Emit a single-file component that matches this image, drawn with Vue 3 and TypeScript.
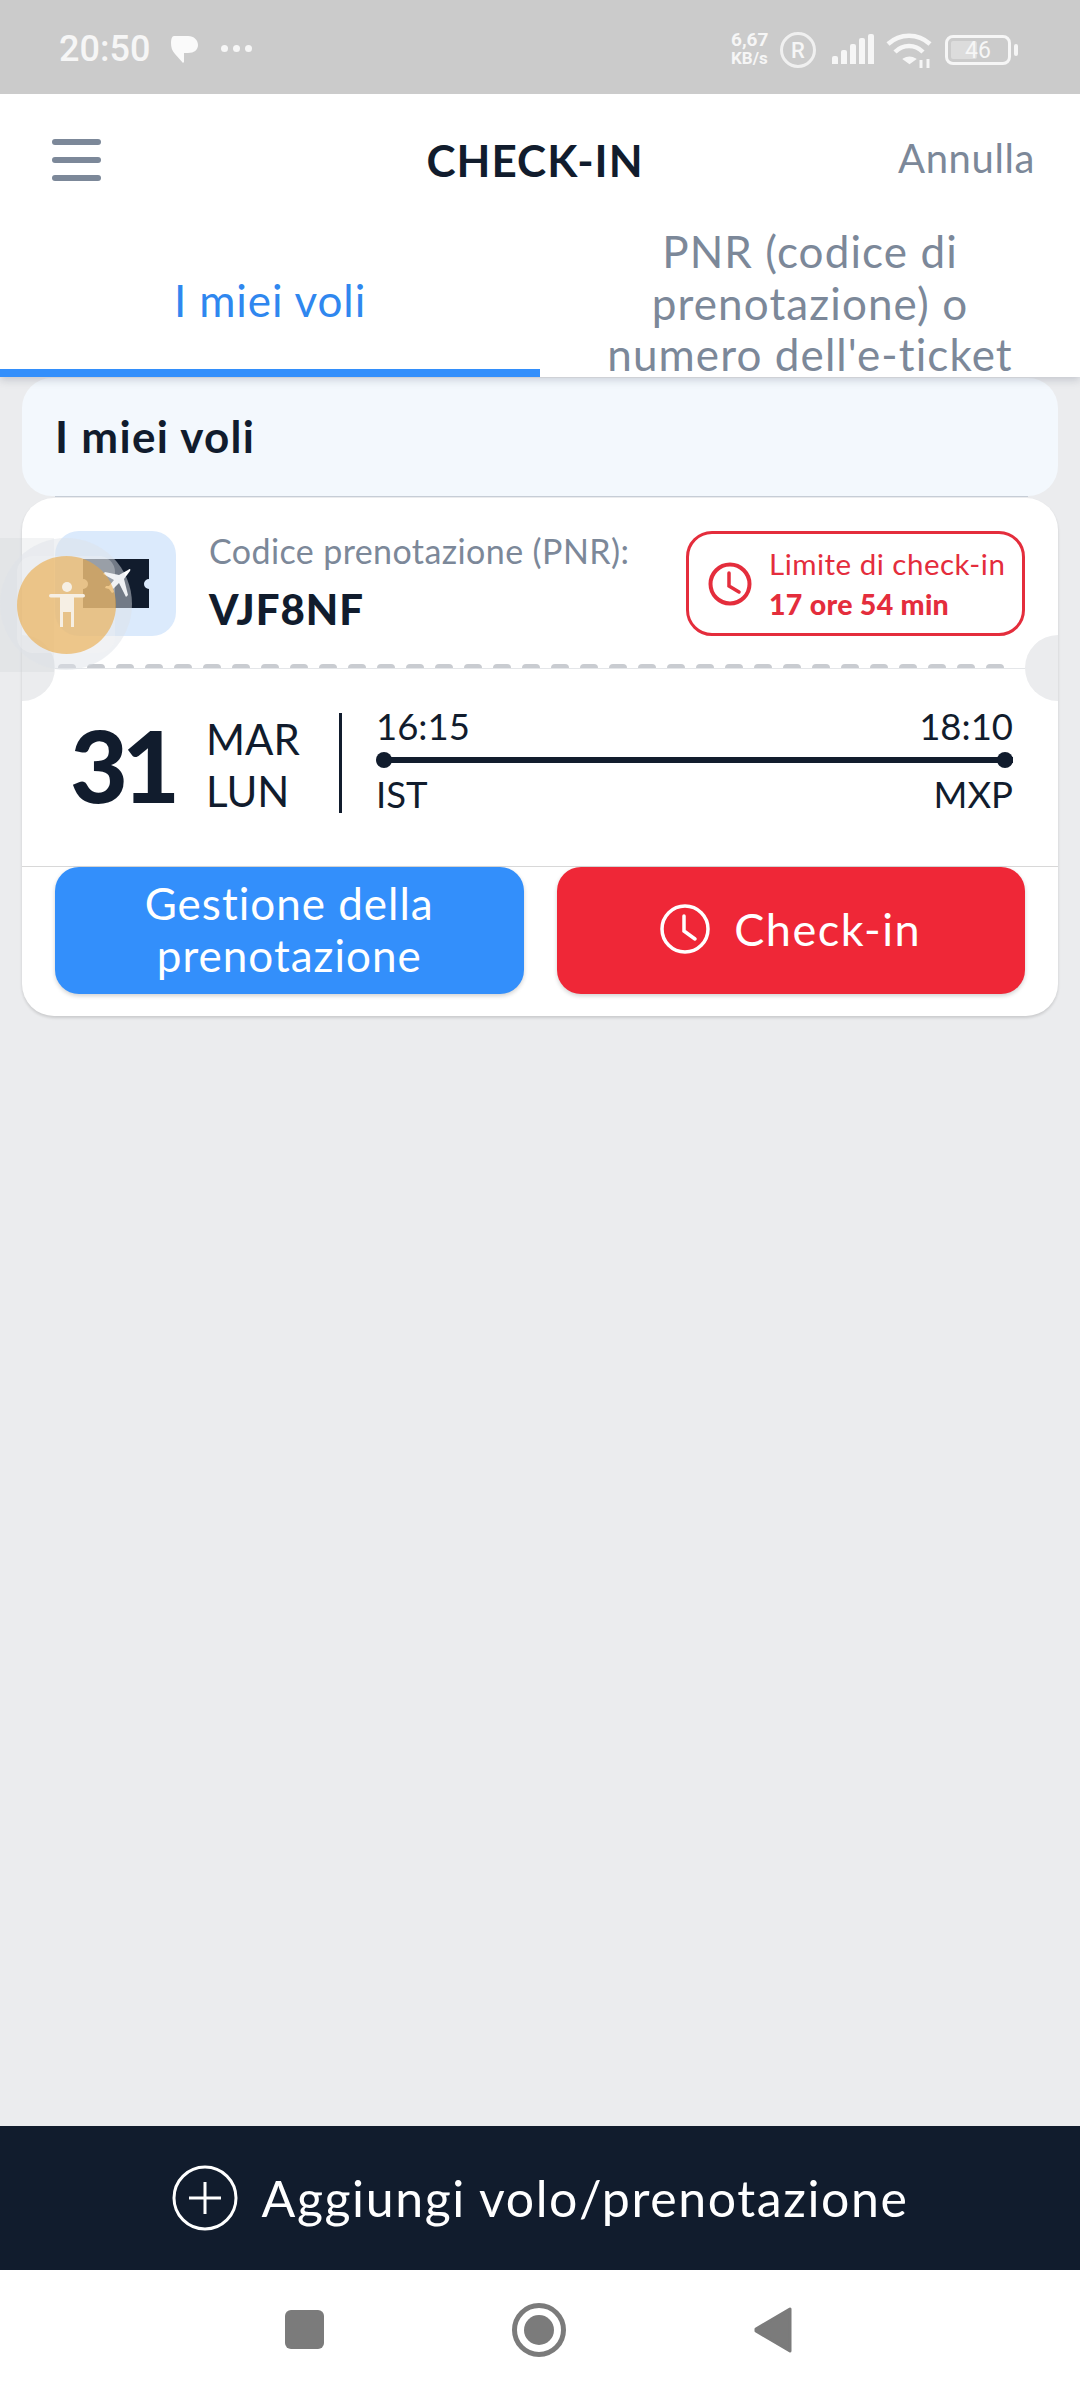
<script setup lang="ts">
const dashes: number[] = Array.from({ length: 33 }, (_, i) => i)
const signal: number[] = [8, 14, 20, 26, 30]
</script>

<template>
  <div class="phone">
    <div class="status">
      <span class="time">20:50</span>
      <svg class="bubble" width="30" height="30" viewBox="0 0 30 30"><path d="M4 2h14c6 0 10 4 10 9s-4 8-10 8h-4v1l0 8-1 1-8-9C2 17 1 13 1 9c0-4 1-7 3-7z" fill="#fafafa"/></svg>
      <span class="dots"><i></i><i></i><i></i></span>
      <span class="grow"></span>
      <span class="speed"><b>6,67</b><b class="kb">KB/s</b></span>
      <span class="reg">R</span>
      <span class="signal"><i v-for="h in signal" :key="h" :style="{ height: h + 'px' }"></i></span>
      <svg class="wifi" width="48" height="36" viewBox="0 0 48 36" fill="none" stroke="#f6f6f6" stroke-width="4.5">
        <path d="M2 11C14 0 32 0 44 11"/><path d="M9 19C17 11 29 11 37 19"/><path d="M18 26c3-2 8-2 11 0l-5.500 4z" fill="#f6f6f6" stroke-width="2"/>
        <path d="M35 27v8M42 26v9" stroke-width="3"/>
      </svg>
      <span class="battery"><span class="level"></span><span class="pct">46</span></span>
      <span class="cap"></span>
    </div>

    <header class="header">
      <span class="burger"><i></i><i></i><i></i></span>
      <h1 class="title">CHECK-IN</h1>
      <span class="cancel">Annulla</span>
    </header>

    <nav class="tabs">
      <div class="tab active"><span>I miei voli</span></div>
      <div class="tab"><span>PNR (codice di prenotazione) o numero dell'e-ticket</span></div>
    </nav>

    <main class="content">
      <div class="section-head">I miei voli</div>
      <section class="ticket">
        <div class="top">
          <div class="thumb">
            <svg width="66" height="49" viewBox="0 0 66 49">
              <path d="M0 0h66v20a5 5 0 0 0 0 10v19H0V30a5 5 0 0 0 0-10z" fill="#111c2d"/>
              <path d="M45 11c2-2 3-1 2 1l-6 8 4 16-2 2-7-14-6 6 1 3-2 1-3-4-4-1 1-2 3 0 5-6-11-6 2-2 14 3z" fill="#fff"/>
            </svg>
          </div>
          <div class="pnr">
            <span class="pnr-label">Codice prenotazione (PNR):</span>
            <strong class="pnr-code">VJF8NF</strong>
          </div>
          <div class="limit">
            <svg width="44" height="44" viewBox="0 0 44 44" fill="none" stroke="#e42d3c" stroke-width="4">
              <circle cx="22" cy="22" r="19.500"/><path d="M21 11v13l10 6" stroke-linecap="round" stroke-width="3.500"/>
            </svg>
            <div class="limit-text">
              <span>Limite di check-in</span>
              <strong>17 ore 54 min</strong>
            </div>
          </div>
        </div>

        <div class="tear">
          <i v-for="d in dashes" :key="d"></i>
          <span class="notch left"></span>
          <span class="notch right"></span>
        </div>

        <div class="flight">
          <span class="day">31</span>
          <div class="month"><span>MAR</span><span>LUN</span></div>
          <span class="vline"></span>
          <div class="route">
            <div class="route-row"><span>16:15</span><span>18:10</span></div>
            <div class="track"></div>
            <div class="route-row"><span>IST</span><span>MXP</span></div>
          </div>
        </div>

        <div class="actions">
          <button class="btn blue">Gestione della prenotazione</button>
          <button class="btn red">
            <svg width="50" height="50" viewBox="0 0 50 50" fill="none" stroke="#fff" stroke-width="3.500">
              <circle cx="25" cy="25" r="23"/><path d="M24 12v15l11 8" stroke-linecap="round"/>
            </svg>
            <span class="checkin">Check-in</span>
          </button>
        </div>
      </section>
    </main>

    <div class="add">
      <svg width="66" height="66" viewBox="0 0 66 66" fill="none" stroke="#fff" stroke-width="3">
        <circle cx="33" cy="33" r="31"/><path d="M17 33h32M33 17v32"/>
      </svg>
      <span>Aggiungi volo/prenotazione</span>
    </div>

    <div class="navbar">
      <span class="nav-square"></span>
      <span class="nav-circle"><i></i></span>
      <svg width="38" height="46" viewBox="0 0 38 46"><path d="M36 2v42L2 24v-2z" fill="#7b7b7b" stroke="#7b7b7b" stroke-width="3" stroke-linejoin="round"/></svg>
    </div>

    <div class="a11y">
      <span class="a11y-panel"></span>
      <span class="a11y-halo"></span>
      <span class="a11y-square"></span>
      <span class="a11y-dot">
        <svg width="36" height="46" viewBox="0 0 36 46" fill="#f6efe4">
          <circle cx="18" cy="5" r="5"/><rect x="0" y="12" width="36" height="3.500" rx="1.700"/><path d="M11 14h14v31h-3V30h-8v15h-3z"/>
        </svg>
      </span>
    </div>
  </div>
</template>

<style>
html, body { margin: 0; padding: 0; }
</style>

<style scoped>
.phone {
  position: relative;
  width: 1080px;
  height: 2400px;
  display: flex;
  flex-direction: column;
  overflow: hidden;
  background: #ebecee;
  font-family: Lato, "Liberation Sans", sans-serif;
  color: #111c2d;
}
.status {
  height: 94px;
  flex: none;
  background: #cbcbcb;
  display: flex;
  align-items: center;
  padding: 6px 0 0 59px;
  box-sizing: border-box;
  color: #f6f6f6;
  font-family: Roboto, sans-serif;
}
.time { font-size: 36px; font-weight: 500; margin-top: -2px; }
.bubble { margin-left: 20px; margin-top: -2px; }
.dots { display: flex; gap: 5px; margin-left: 21px; margin-top: -4px; }
.dots i { width: 7px; height: 7px; border-radius: 50%; background: #f6f6f6; }
.grow { flex: 1; }
.speed { display: flex; flex-direction: column; align-items: flex-start; font-size: 19px; line-height: 18px; width: 42px; margin-top: -2px; }
.speed .kb { font-size: 17px; }
.reg {
  box-sizing: border-box;
  width: 36px; height: 36px;
  margin-left: 7px;
  border: 3.500px solid #f0f0f0;
  border-radius: 50%;
  display: flex; align-items: center; justify-content: center;
  font-size: 22px; font-weight: 500;
}
.signal { display: flex; align-items: flex-end; gap: 3px; height: 30px; margin-left: 16px; margin-top: -2px; }
.signal i { width: 6px; background: #f6f6f6; border-radius: 2px 2px 0 0; }
.wifi { margin-left: 12px; margin-top: 2px; }
.battery {
  position: relative;
  box-sizing: border-box;
  width: 66px; height: 30px;
  margin-left: 11px;
  border: 3.500px solid #f6f6f6;
  border-radius: 8px;
  display: flex; align-items: center; justify-content: center;
  font-size: 23px;
}
.level { position: absolute; left: 3px; top: 3px; bottom: 3px; width: 26px; background: #dcdcdc; border-radius: 2px; }
.pct { position: relative; }
.cap { width: 4px; height: 12px; background: #f6f6f6; border-radius: 2px; margin: 0 62px 0 3px; }

.header {
  height: 132px;
  flex: none;
  background: #fff;
  display: grid;
  grid-template-columns: 1fr auto 1fr;
  align-items: center;
  padding: 0 45px 0 52px;
  box-sizing: border-box;
}
.burger { display: flex; flex-direction: column; gap: 11.500px; width: 49px; }
.burger i { height: 6.500px; border-radius: 3px; background: #7c8899; }
.title { margin: 0 17px 0 0; font-size: 44px; font-weight: 700; letter-spacing: 1px; line-height: 1; }
.cancel { justify-self: end; font-size: 40px; letter-spacing: .6px; color: #7c8899; margin-top: -4px; }

.tabs {
  height: 151px;
  flex: none;
  display: flex;
  background: #fff;
  box-shadow: 0 3px 8px rgba(60, 70, 90, .22);
  clip-path: inset(0 0 -14px 0);
  position: relative;
  z-index: 1;
  font-size: 44px;
  letter-spacing: 1.100px;
  line-height: 51.500px;
  color: #7c8899;
  overflow: hidden;
}
.tab { width: 540px; text-align: center; box-sizing: border-box; padding: 0 55px 0; }
.tab.active {
  color: #2f87ef;
  border-bottom: 8px solid #338ffb;
  display: flex; align-items: center; justify-content: center;
  padding: 6px 0 0;
  letter-spacing: .9px;
}
.content { flex: 1; padding: 1px 22px 0; min-height: 0; }
.section-head {
  position: relative;
  height: 118px;
  box-sizing: border-box;
  background: #f3f8fd;
  border-radius: 30px;
  padding: 34px 33px 0;
  font-size: 44px;
  font-weight: 700;
  letter-spacing: 1.300px;
  line-height: 48px;
}
.section-head::after {
  content: "";
  position: absolute;
  left: 33px; right: 30px; bottom: -1px;
  height: 1.500px;
  background: #c6cdd6;
}
.ticket {
  margin-top: 2px;
  background: #fff;
  border-radius: 32px;
  height: 518px;
  box-shadow: 0 2px 3px rgba(0, 0, 0, .14);
  display: flex;
  flex-direction: column;
}
.top { height: 166px; flex: none; display: flex; padding: 33px 33px 0; box-sizing: border-box; }
.thumb {
  width: 121px; height: 105px;
  border-radius: 24px;
  background: #dbeafc;
  display: flex; align-items: center; justify-content: center;
  flex: none;
}
.pnr { margin-left: 33px; display: flex; flex-direction: column; flex: 1; min-width: 0; white-space: nowrap; }
.pnr-label { font-size: 34px; letter-spacing: .4px; line-height: 40px; color: #7c8899; }
.pnr-code { font-size: 42px; font-weight: 900; line-height: 50px; margin-top: 13px; letter-spacing: 1px; }
.limit {
  width: 339px; height: 105px;
  box-sizing: border-box;
  border: 3px solid #e42d3c;
  border-radius: 26px;
  display: flex; align-items: center;
  padding: 0 0 0 19px;
  gap: 17px;
  color: #e42d3c;
  flex: none;
  font-size: 29.500px;
  letter-spacing: .5px;
}
.limit-text { display: flex; flex-direction: column; line-height: 41px; }
.limit-text strong { font-weight: 900; font-size: 28.500px; letter-spacing: .3px; }
.tear {
  position: relative;
  height: 4px;
  flex: none;
  padding: 0 36px;
  display: flex;
  gap: 11px;
  border-bottom: 1px solid #e4e6e9;
}
.tear i { width: 18px; height: 4px; flex: none; border-radius: 5px 5px 0 0; background: #c9ccd1; }
.notch {
  position: absolute;
  top: -29px;
  width: 66px; height: 66px;
  border-radius: 50%;
  background: #ebecee;
}
.notch.left { left: -33px; clip-path: inset(0 0 0 33px); }
.notch.right { right: -33px; clip-path: inset(0 33px 0 0); }
.flight { height: 198px; flex: none; box-sizing: border-box; display: flex; align-items: center; padding: 0 45px 0 48px; border-bottom: 1px solid #d8d8d8; }
.day { font-size: 100px; font-weight: 900; line-height: 1; letter-spacing: -6px; width: 136px; margin-top: -7px; }
.month { display: flex; flex-direction: column; font-size: 42px; line-height: 52px; margin-top: -5px; width: 133px; }
.vline { width: 3px; height: 100px; background: #111c2d; margin-top: -10px; flex: none; }
.route { flex: 1; margin-left: 34px; margin-top: -5px; font-size: 36.500px; display: flex; flex-direction: column; }
.route-row { display: flex; justify-content: space-between; line-height: 44px; }
.route-row:first-child { margin-top: -11px; }
.track { position: relative; height: 6px; margin: 9px 0 9px 3px; background: #111c2d; }
.track::before, .track::after {
  content: "";
  position: absolute;
  top: -5px;
  width: 16px; height: 16px;
  border-radius: 50%;
  background: #111c2d;
}
.track::before { left: -3px; }
.track::after { right: 0; }
.actions { display: flex; gap: 33px; padding: 0 33px; height: 127px; flex: none; }
.btn {
  flex: 1;
  border: 0;
  border-radius: 24px;
  color: #fff;
  font-family: inherit;
  font-size: 44px;
  letter-spacing: 1px;
  line-height: 52px;
  padding: 0 50px 3px;
  box-shadow: 0 2px 4px rgba(0, 0, 0, .18);
  display: flex; align-items: center; justify-content: center;
  gap: 24px;
}
.checkin { font-size: 45px; letter-spacing: 1.500px; }
.blue { background: #338ffb; }
.red { background: #ef2737; }
.add {
  height: 144px;
  flex: none;
  background: #111c2d;
  color: #fff;
  font-size: 50px;
  letter-spacing: 1.600px;
  display: flex; align-items: center; justify-content: center;
  gap: 24px;
}
.navbar {
  height: 130px;
  flex: none;
  background: #fff;
  display: flex;
  align-items: center;
  padding: 0 0 11px 285px;
  box-sizing: border-box;
}
.nav-square { width: 39px; height: 39px; border-radius: 6px; background: #7b7b7b; }
.nav-circle {
  box-sizing: border-box;
  width: 54px; height: 54px;
  margin-left: 188px;
  border: 5px solid #7b7b7b;
  border-radius: 50%;
  display: flex; align-items: center; justify-content: center;
}
.nav-circle i { width: 30px; height: 30px; border-radius: 50%; background: #7b7b7b; }
.navbar svg { margin-left: 188px; }

.a11y { position: absolute; left: 0; top: 538px; width: 132px; height: 134px; z-index: 3; }
.a11y-panel { position: absolute; left: 0; top: 0; width: 54px; height: 134px; background: rgba(200, 205, 210, .22); }
.a11y-halo { position: absolute; left: 0; top: 0; width: 132px; height: 132px; border-radius: 50%; background: rgba(222, 226, 232, .48); }
.a11y-square { position: absolute; left: 17px; top: 18px; width: 98px; height: 97px; border-radius: 16px; background: rgba(245, 245, 245, .3); }
.a11y-dot {
  position: absolute; left: 17px; top: 18px;
  width: 99px; height: 98px;
  border-radius: 50%;
  background: rgba(235, 167, 63, .59);
  display: flex; align-items: center; justify-content: center;
}
</style>
